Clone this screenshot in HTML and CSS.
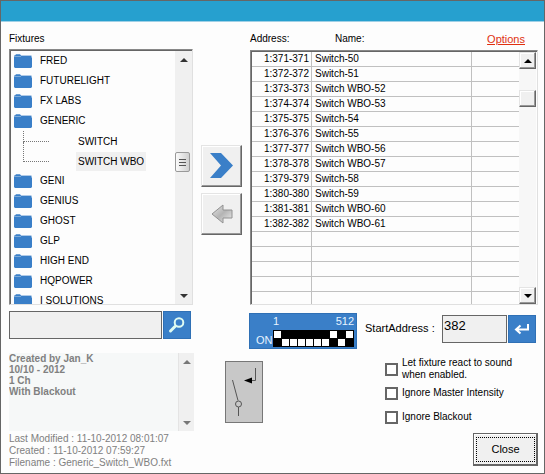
FILE: index.html
```html
<!DOCTYPE html>
<html lang="en">
<head>
<meta charset="utf-8">
<title>Fixtures</title>
<link rel="stylesheet" href="styles.css">
</head>
<body>
<svg width="0" height="0" class="defs" aria-hidden="true">
  <symbol id="folder" viewBox="0 0 18 14">
    <path fill="#3a7fc8" d="M0 1.5h1L2 .3h4L7 1.500h10.500v2H0zM0 3h17.200l.8.800V13l-1 1H1l-1-1z"/>
    <path fill="#fff" opacity=".45" d="M0 2h7v.7H0zM7 0h11v1.600H7z"/>
  </symbol>
  <symbol id="up" viewBox="0 0 8 4"><path d="M4 0l4 4H0z"/></symbol>
  <symbol id="down" viewBox="0 0 8 4"><path d="M0 0h8L4 4z"/></symbol>
</svg>
<div class="window">
  <header class="titlebar"></header>
  <main class="content">
    <div class="lists">
      <section class="panel">
        <h2 class="caption">Fixtures</h2>
        <div class="tree sunken">
          <ul class="tree-items">
            <li class="item"><svg class="folder"><use href="#folder"/></svg>FRED</li>
            <li class="item"><svg class="folder"><use href="#folder"/></svg>FUTURELIGHT</li>
            <li class="item"><svg class="folder"><use href="#folder"/></svg>FX LABS</li>
            <li class="item"><svg class="folder"><use href="#folder"/></svg>GENERIC</li>
            <li class="item child"><span class="branch"></span><span class="leaf">SWITCH</span></li>
            <li class="item child"><span class="branch"></span><span class="leaf selected">SWITCH WBO</span></li>
            <li class="item"><svg class="folder"><use href="#folder"/></svg>GENI</li>
            <li class="item"><svg class="folder"><use href="#folder"/></svg>GENIUS</li>
            <li class="item"><svg class="folder"><use href="#folder"/></svg>GHOST</li>
            <li class="item"><svg class="folder"><use href="#folder"/></svg>GLP</li>
            <li class="item"><svg class="folder"><use href="#folder"/></svg>HIGH END</li>
            <li class="item"><svg class="folder"><use href="#folder"/></svg>HQPOWER</li>
            <li class="item"><svg class="folder"><use href="#folder"/></svg>I SOLUTIONS</li>
          </ul>
          <div class="scroll flat">
            <button class="arrow" aria-label="Scroll up"><svg><use href="#up"/></svg></button>
            <div class="track tree-track"><div class="grip"><i></i><i></i><i></i></div></div>
            <button class="arrow" aria-label="Scroll down"><svg><use href="#down"/></svg></button>
          </div>
        </div>
      </section>
      <div class="transfer">
        <button class="move" aria-label="Add fixture">
          <svg width="24" height="26" viewBox="0 0 24 26"><path fill="#3a7fc8" d="M0 0h11l12 12.500L11 25H0l11-12.500z"/></svg>
        </button>
        <button class="move" aria-label="Remove fixture">
          <svg width="22" height="20" viewBox="0 0 22 20"><defs><linearGradient id="g" x2="1" y2="1"><stop stop-color="#e8e8e8"/><stop offset=".5" stop-color="#b4b4b4"/><stop offset="1" stop-color="#eee"/></linearGradient></defs><path fill="url(#g)" stroke="#929292" d="M1 10L12 1v5h9v8h-9v5z"/></svg>
        </button>
      </div>
      <section class="panel">
        <div class="captions">
          <span class="caption address">Address:</span><span class="caption">Name:</span>
          <a class="options" href="#">Options</a>
        </div>
        <div class="patch sunken">
          <div class="patch-rows">
            <table>
              <colgroup><col class="col-address"><col><col class="col-extra"></colgroup>
              <tbody>
                <tr><td>1:371-371</td><td>Switch-50</td><td></td></tr>
                <tr><td>1:372-372</td><td>Switch-51</td><td></td></tr>
                <tr><td>1:373-373</td><td>Switch WBO-52</td><td></td></tr>
                <tr><td>1:374-374</td><td>Switch WBO-53</td><td></td></tr>
                <tr><td>1:375-375</td><td>Switch-54</td><td></td></tr>
                <tr><td>1:376-376</td><td>Switch-55</td><td></td></tr>
                <tr><td>1:377-377</td><td>Switch WBO-56</td><td></td></tr>
                <tr><td>1:378-378</td><td>Switch WBO-57</td><td></td></tr>
                <tr><td>1:379-379</td><td>Switch-58</td><td></td></tr>
                <tr><td>1:380-380</td><td>Switch-59</td><td></td></tr>
                <tr><td>1:381-381</td><td>Switch WBO-60</td><td></td></tr>
                <tr><td>1:382-382</td><td>Switch WBO-61</td><td></td></tr>
                <tr><td></td><td></td><td></td></tr>
                <tr><td></td><td></td><td></td></tr>
                <tr><td></td><td></td><td></td></tr>
                <tr><td></td><td></td><td></td></tr>
                <tr><td></td><td></td><td></td></tr>
              </tbody>
            </table>
          </div>
          <div class="scroll classic">
            <button class="arrow raised" aria-label="Scroll up"><svg><use href="#up"/></svg></button>
            <div class="track patch-track"><div class="thumb raised"></div></div>
            <button class="arrow raised" aria-label="Scroll down"><svg><use href="#down"/></svg></button>
          </div>
        </div>
      </section>
    </div>

    <div class="controls">
      <form class="search">
        <input class="field" type="text" aria-label="Search fixtures">
        <button class="blue" type="button" aria-label="Search">
          <svg width="18" height="18" viewBox="0 0 18 18" fill="none" stroke="#dffbf2" stroke-linecap="round"><circle cx="11" cy="6.500" r="4.300" stroke-width="2"/><path stroke-width="3" d="M7 10.500L2.500 15"/></svg>
        </button>
      </form>
      <div class="dip">
        <div class="dip-range"><span>1</span><span>512</span></div>
        <span class="dip-on">ON</span>
        <svg width="81" height="17" viewBox="0 0 81 17" shape-rendering="crispEdges"><path d="M0 0h81v17H0z"/><path fill="#fff" d="M1 1h7v7H1zM57 1h7v7h-7zM73 1h7v7h-7zM9 9h7v7H9zM17 9h7v7h-7zM25 9h7v7h-7zM33 9h7v7h-7zM41 9h7v7h-7zM49 9h7v7h-7zM65 9h7v7h-7z"/></svg>
      </div>
      <form class="start">
        <label for="start">StartAddress :</label>
        <input class="field" id="start" type="text" value="382">
        <button class="blue" type="button" aria-label="Apply address">
          <svg width="16" height="12" viewBox="0 0 16 12"><path fill="none" stroke="#fff" stroke-width="2" d="M14 1v5.500H3M6.500 2.500L2 6.500l4.500 4"/></svg>
        </button>
      </form>
    </div>

    <div class="details">
      <section class="info">
        <div class="notes">
          <textarea readonly aria-label="Notes">Created by Jan_K
10/10 - 2012
1 Ch
With Blackout</textarea>
          <div class="scroll flat faded">
            <button class="arrow" aria-label="Scroll up"><svg><use href="#up"/></svg></button>
            <div class="track"></div>
            <button class="arrow" aria-label="Scroll down"><svg><use href="#down"/></svg></button>
          </div>
        </div>
        <p class="meta">Last Modified : 11-10-2012 08:01:07<br>Created : 11-10-2012 07:59:27<br>Filename : Generic_Switch_WBO.fxt</p>
      </section>
      <div class="relay">
        <svg width="34" height="58" viewBox="0 0 34 58" fill="none" stroke="#555"><path d="M5.500 17l5.500 20.500M11.500 44v9M28.500 5v12.500H24"/><circle cx="11.500" cy="41" r="3"/><path fill="#000" stroke="none" d="M17 17.500l8-3v6z"/></svg>
      </div>
      <section class="settings">
        <label class="check"><input type="checkbox"><span>Let fixture react to sound<br>when enabled.</span></label>
        <label class="check"><input type="checkbox"><span>Ignore Master Intensity</span></label>
        <label class="check"><input type="checkbox"><span>Ignore Blackout</span></label>
        <button class="close"><span>Close</span></button>
      </section>
    </div>
  </main>
</div>
</body>
</html>
```
FILE: styles.css
```css
* { box-sizing: border-box; }

body {
  margin: 0;
  font: 10px/12px "Liberation Sans", Arial, sans-serif;
  color: #000;
  background: #fdfdfd;
}

button, input, textarea { font: inherit; margin: 0; padding: 0; border-radius: 0; }
h2, p, ul { margin: 0; padding: 0; }
svg { display: block; flex: none; }
.defs { position: absolute; }

.window {
  display: flex;
  flex-direction: column;
  height: 100vh;
  min-height: 460px;
  border: 1px solid #666;
}

.titlebar {
  height: 21px;
  flex: none;
  background: #26a0cf;
  border-bottom: 1px solid #9fd0e6;
}

.content {
  flex: 1;
  min-height: 0;
  display: flex;
  flex-direction: column;
  padding: 0 6px 0 8px;
}

/* Fixture tree and patch table */
.lists {
  flex: 1;
  min-height: 0;
  display: grid;
  grid-template-columns: 184px 57px minmax(0, 1fr);
  grid-template-rows: minmax(0, 1fr);
}

.panel { display: flex; flex-direction: column; min-height: 0; }

.caption { font-size: 10px; font-weight: normal; line-height: 12px; }
h2.caption { padding: 11px 0 4px; }

.sunken {
  flex: 1;
  min-height: 0;
  display: flex;
  border: 1px solid;
  border-color: #888 #e0e0e0 #e0e0e0 #888;
  box-shadow: inset 1px 1px #666;
  padding: 1px 0 0 1px;
}
.patch { padding-right: 1px; }

.tree-items { flex: 1; overflow: hidden; list-style: none; padding-left: 3px; }

.item { display: flex; align-items: center; height: 20px; white-space: nowrap; }
.folder { width: 18px; height: 14px; margin-right: 8px; }

.branch {
  align-self: flex-start;
  width: 26px;
  height: 11px;
  margin-left: 9px;
  border: dotted #777;
  border-width: 0 0 1px 1px;
}
.child + .child .branch { height: 20px; margin-top: -9px; }
.leaf { line-height: 19px; padding: 0 2px; margin-left: 27px; }
.selected { background: #f0f0f0; }

.scroll { width: 17px; flex: none; display: flex; flex-direction: column; background: #f0f0f0; }
.scroll.classic { background: #f7f7f7; }
.track { flex: 1; }
.arrow {
  height: 17px;
  display: grid;
  place-items: center;
  border: 0;
  background: none;
  fill: #333;
}
.arrow svg { width: 8px; height: 4px; }
.faded { width: 16px; border-left: 1px solid #e4e4e4; }
.faded .arrow { fill: #777; }

.tree-track { padding-top: 84px; }
.grip {
  height: 20px;
  width: 15px;
  display: grid;
  align-content: center;
  justify-content: center;
  gap: 2px;
  border: 1px solid #999;
  border-radius: 2px;
  background: linear-gradient(90deg, #fafafa, #d0d0d0);
}
.grip i { width: 7px; height: 1px; background: #555; }

.transfer { display: flex; flex-direction: column; gap: 6px; padding: 123px 8px 0 8px; }

.raised, .move {
  border: 1px solid;
  border-color: #e4e4e4 #666 #666 #e4e4e4;
  box-shadow: inset -1px -1px #999, inset 1px 1px #fff;
  background: #f0f0f0;
}
.raised { fill: #000; }
.move { height: 42px; display: grid; place-items: center; }

.captions { display: flex; align-items: center; height: 28px; padding: 6px 13px 0 0; }
.address { width: 85px; }
.options { margin-left: auto; font-size: 11px; color: #e03010; }

.patch-rows { flex: 1; overflow: hidden; }
.patch-rows table { width: 100%; table-layout: fixed; border-collapse: separate; border-spacing: 0; }
.patch-rows td {
  height: 15px;
  padding: 0 3px;
  line-height: 14px;
  border-right: 1px solid #c0c0c0;
  border-bottom: 1px solid #c0c0c0;
  white-space: nowrap;
}
.patch-rows td:first-child { text-align: right; padding-right: 2px; }
.patch-rows td:last-child { border-right: 0; }
.col-address { width: 60px; }
.col-extra { width: 47px; }
.patch-track { padding-top: 21px; }
.thumb { height: 17px; }

/* Search, DIP switch and start address */
.controls {
  flex: none;
  display: grid;
  grid-template-columns: 184px 108px minmax(0, 1fr);
  padding: 6px 0 4px;
}

.search, .start { display: flex; align-items: flex-start; gap: 1px; }
.field { height: 28px; min-width: 0; border: 1px solid #666; background: #f0f0f0; }
.search .field { flex: 1; }
.search { padding-right: 2px; }

.blue {
  width: 28px;
  height: 28px;
  flex: none;
  display: grid;
  place-items: center;
  border: 1px solid #2f70b5;
  background: #3a7fc8;
}

.controls { column-gap: 0; grid-template-columns: 184px 164px minmax(0, 1fr); }

.dip {
  display: grid;
  grid-template-columns: 1fr 81px;
  height: 36px;
  margin: 2px 0 0 56px;
  padding: 1px 2px 0 6px;
  color: #e8f4ff;
  font-size: 11px;
  border: 1px solid #2f70b5;
  background: #3a7fc8;
}
.dip-range { grid-column: 2; display: flex; justify-content: space-between; line-height: 13px; }
.dip-on { line-height: 16px; padding-top: 3px; grid-column: 1; }
.dip svg { margin-top: 1px; }

.start { padding: 4px 2px 0 8px; }
.start label { flex: 1; font-size: 11px; line-height: 26px; white-space: nowrap; }
.start .field { width: 65px; padding: 0 1px 8px; font-size: 13px; }

/* Fixture details */
.details {
  flex: none;
  display: grid;
  grid-template-columns: 185px 31px 38px minmax(0, 1fr);
  height: 120px;
}

.notes { display: flex; height: 78px; }
.notes textarea {
  flex: 1;
  min-width: 0;
  border: 0;
  resize: none;
  overflow: hidden;
  font-weight: bold;
  line-height: 11px;
  color: #808080;
  background: #f6f8f8;
}
.meta { padding-top: 2px; color: #808080; white-space: nowrap; }

.relay {
  grid-column: 3;
  height: 62px;
  margin-top: 8px;
  border: 1px solid #777;
  padding: 1px;
  background: #c8c8c8;
}

.settings { display: flex; flex-direction: column; align-items: flex-start; padding: 4px 0 0 122px; }
.check { display: flex; align-items: center; gap: 4px; height: 24px; white-space: nowrap; }
.check input {
  appearance: none;
  width: 13px;
  height: 13px;
  flex: none;
  border: 2px solid #666;
  background: #fff;
}

.close {
  align-self: flex-end;
  width: 65px;
  height: 33px;
  margin-top: 4px;
  padding: 2px;
  font-size: 11px;
  border: 1px solid #666;
  box-shadow: inset -1px -1px #666, inset 1px 1px #fff;
  background: #f0f0f0;
}
.close span { display: block; line-height: 23px; border: 1px dotted #000; }
```
